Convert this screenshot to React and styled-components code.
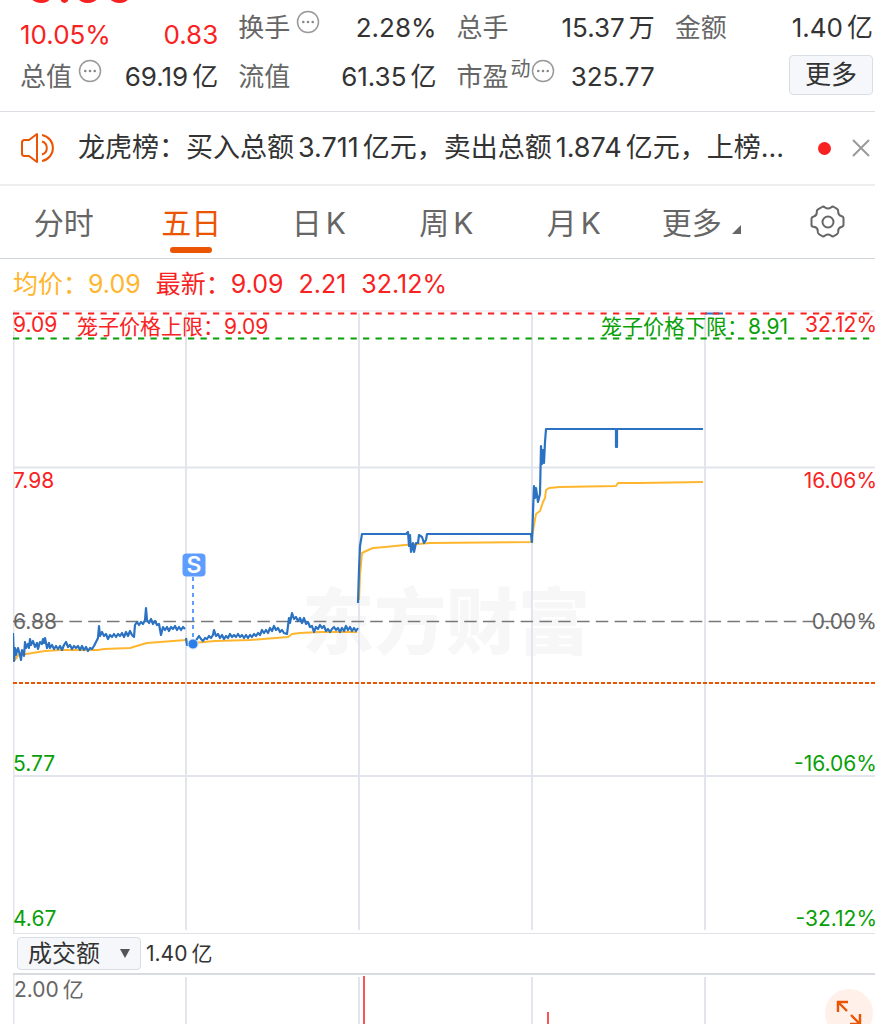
import React, { useState } from 'react'
import styled, { createGlobalStyle } from 'styled-components'

const GlobalStyle = createGlobalStyle`
  * {
    box-sizing: border-box;
  }

  body {
    margin: 0;
    background: #fff;
    color: #333;
    font-family: Inter, 'Noto Sans CJK SC', sans-serif;
  }

  button,
  select {
    font-family: inherit;
    color: inherit;
    margin: 0;
    padding: 0;
    border: none;
    background: none;
    cursor: pointer;
  }
`

const Page = styled.main`
  display: flex;
  flex-direction: column;
  height: 100vh;
  overflow: hidden;
`

const Quote = styled.section`
  display: grid;
  grid-template-columns: repeat(4, 1fr);
  grid-template-rows: 52px 46px;
  column-gap: 20px;
  height: 112px;
  flex: none;
  padding: 0 2px 0 20px;
  border-bottom: 1px solid #dcdfe3;
  font-size: 26px;
  line-height: 32px;
`

const PriceCell = styled.div`
  display: flex;
  flex-direction: column;
  justify-content: flex-end;
  overflow: hidden;
  padding-bottom: 1px;
  color: #f92222;
`

const Price = styled.strong`
  margin-bottom: 10px;
  padding-left: 6px;
  font-size: 50px;
  line-height: 48px;
  font-weight: 600;
`

const PriceChange = styled.div`
  display: flex;
  justify-content: space-between;
`

const Stat = styled.div`
  display: flex;
  align-items: center;
  justify-content: space-between;
  padding-top: 4px;
  white-space: nowrap;
`

const StatName = styled.span`
  display: flex;
  align-items: center;
  gap: 6px;
  color: #666;

  sup {
    margin: -16px -6px 0 -4px;
    font-size: 20px;
    line-height: 24px;
  }

  svg {
    margin-top: -12px;
  }
`

const Num = styled.span`
  margin: 0 4px;

  &:first-child {
    margin-left: 0;
  }
`

const MoreButton = styled.button`
  justify-self: end;
  align-self: center;
  width: 84px;
  height: 40px;
  border: 1px solid #d9dde6;
  border-radius: 4px;
  background: #f6f7fa;
  font-size: 26px;
  line-height: 32px;
`

const Notice = styled.section`
  display: flex;
  align-items: center;
  flex: none;
  height: 74px;
  padding: 0 4px 0 20px;
  border-bottom: 2px solid #eee;
`

const NoticeText = styled.p`
  flex: 1;
  min-width: 0;
  margin: 0 0 0 20px;
  overflow: hidden;
  white-space: nowrap;
  font-size: 27px;
  line-height: 36px;

  ${Num}:first-child {
    margin-left: 4px;
  }
`

const Dot = styled.i`
  width: 13px;
  height: 13px;
  margin: 0 20px;
  border-radius: 50%;
  background: #f92222;
`

const IconButton = styled.button`
  display: flex;
  align-items: center;
  justify-content: center;
`

const Tabs = styled.nav`
  display: flex;
  flex: none;
  height: 73px;
  border-bottom: 1px solid #d0d5da;
`

const Tab = styled.button`
  position: relative;
  flex: 1;
  padding-top: 2px;
  font-size: 30px;
  line-height: 36px;
  color: ${props => (props.$active ? '#ea5504' : '#666')};

  &::after {
    content: '';
    display: ${props => (props.$active ? 'block' : 'none')};
    position: absolute;
    left: 50%;
    bottom: 5px;
    width: 42px;
    height: 6px;
    margin-left: -21px;
    border-radius: 3px;
    background: #ea5504;
  }

  ${Num} {
    margin: 0 0 0 4px;
  }

  svg {
    margin-left: 10px;
  }
`

const SettingsButton = styled(IconButton)`
  width: 110px;
  padding-left: 16px;
`

const Legend = styled.div`
  display: flex;
  align-items: baseline;
  gap: 15px;
  flex: none;
  height: 51px;
  padding-left: 13px;
  font-size: 25px;
  line-height: 51px;
  color: #f92222;
`

const Average = styled.span`
  color: #ffb62e;
`

const Chart = styled.section`
  position: relative;
  flex: 1;
  min-height: 300px;
  margin-left: 13px;

  > svg {
    position: relative;
    display: block;
    width: 100%;
    height: 100%;
  }
`

const Watermark = styled.div`
  position: absolute;
  left: 50%;
  top: 50%;
  transform: translate(-50%, -50%);
  margin-left: 2px;
  white-space: nowrap;
  font-size: 72px;
  line-height: 80px;
  font-weight: 900;
  color: #f7f7f7;
`

const AxisLabel = styled.span`
  position: absolute;
  top: ${props => props.$top};
  left: ${props => (props.$right ? 'auto' : '0')};
  right: ${props => (props.$right ? '-2px' : 'auto')};
  transform: translateY(-50%);
  font-size: 21px;
  line-height: 24px;
  color: ${props => props.$color};
`

const LimitLabel = styled.span`
  position: absolute;
  top: 5px;
  left: ${props => (props.$right ? 'auto' : '64px')};
  right: ${props => (props.$right ? '87px' : 'auto')};
  font-size: 21px;
  line-height: 24px;
  white-space: nowrap;
  color: ${props => props.$color};
`

const Marker = styled.span`
  position: absolute;
  left: 21%;
  top: 41%;
  transform: translate(-50%, -50%);
  width: 23px;
  height: 23px;
  border-radius: 4px;
  background: #5c9dff;
  color: #fff;
  font-size: 23px;
  line-height: 23px;
  font-weight: 600;
  text-align: center;
`

const VolumeBar = styled.div`
  display: flex;
  align-items: center;
  gap: 5px;
  flex: none;
  height: 42px;
  margin-left: 13px;
  padding-left: 4px;
  border-top: 1px solid #dfe2e8;
  border-bottom: 2px solid #d8dbe0;
  font-size: 21px;
  line-height: 24px;
`

const SelectBox = styled.label`
  position: relative;
  display: block;

  select {
    appearance: none;
    width: 124px;
    height: 33px;
    padding-left: 10px;
    border: 1px solid #d9dde6;
    border-radius: 4px;
    background: #f6f7fa;
    font-size: 24px;
    line-height: 30px;
  }

  svg {
    position: absolute;
    right: 11px;
    top: 12px;
    pointer-events: none;
  }
`

const VolumeChart = styled.section`
  position: relative;
  flex: none;
  height: 49px;
  margin-left: 13px;
  overflow: hidden;

  > svg {
    display: block;
    width: 100%;
    height: 100%;
  }
`

const VolumeMax = styled.span`
  position: absolute;
  left: 1px;
  top: 3px;
  font-size: 21px;
  line-height: 24px;
  color: #666;
`

const ExpandButton = styled(IconButton)`
  position: absolute;
  right: 2px;
  top: 14px;
  width: 48px;
  height: 48px;
  border-radius: 50%;
  background: #fff0ea;
`

const RED = '#f92222'
const GREEN = '#089f08'
const GRID_X = [186, 359, 532, 705]

const labels = [
  { price: '9.09', rate: '32.12%', top: '15px', color: RED },
  { price: '7.98', rate: '16.06%', top: '27.5%', color: RED },
  { price: '6.88', rate: '0.00%', top: '50%', color: '#666' },
  { price: '5.77', rate: '-16.06%', top: '72.8%', color: GREEN },
  { price: '4.67', rate: '-32.12%', top: 'calc(100% - 14px)', color: GREEN },
]

// 每日分时价
const priceLines = [
  '13,633 14,661 15,648 16,655 18,648 20,655 21,660 22,650 24,656 25,642 26,648 28,644 29,648 30,639 31,645 33,641 35,647 37,643 38,649 40,642 42,644 43,639 44,643 45,638 47,648 49,643 50,648 52,645 54,649 56,646 58,649 60,646 62,650 64,645 66,642 68,647 70,645 72,649 74,646 76,648 78,646 80,650 82,646 84,650 86,647 88,651 90,648 92,649 94,646 96,642 98,638 99,626 100,636 102,632 104,636 106,634 108,639 110,635 112,637 114,634 116,637 118,634 120,636 122,633 124,637 126,632 128,636 130,631 132,635 134,637 135,625 137,622 139,625 141,622 143,624 145,620 146,608 147,620 149,623 151,619 153,624 155,621 157,625 159,624 161,635 163,627 165,630 167,627 169,631 171,627 173,629 175,626 177,630 179,627 181,630 183,627 185,629',
  '186,638 187,645 193,644 197,639 199,636 201,639 203,641 205,638 207,639 209,636 211,638 213,635 214,630 216,636 218,634 220,638 222,635 224,639 226,636 228,638 230,634 232,637 234,635 236,637 238,634 240,637 242,635 244,638 246,635 248,638 250,635 252,637 254,634 256,636 258,633 260,635 262,630 264,633 266,630 268,633 270,628 272,631 274,626 276,630 278,628 280,632 282,630 284,633 287,634 289,618 290,623 292,613 294,619 296,617 298,621 300,618 302,623 304,618 306,624 308,622 310,627 312,626 314,632 316,627 318,629 320,625 322,628 324,626 326,631 328,629 330,632 332,629 334,627 336,630 338,628 340,632 342,628 344,631 346,626 348,630 350,627 352,631 354,628 356,631 358,628',
  '358,603 359,570 360,546 362,534 406,534 408,532 409,546 410,535 411,552 413,543 414,552 416,543 418,543 419,535 422,537 424,543 426,540 427,534 531,534 532,542 533,512 534,486 535,498 536,488 538,502 540,494 541,446 542,464 543,450 544,463 545,442 546,429 616,429 616,447 617,447 617,429 703,429',
]

const averageLines = [
  '13,648 15,660 19,654 26,654 45,651 60,650 98,650 104,649 130,648 140,645 147,643 160,642 186,640',
  '193,643 215,641 250,640 288,637 292,634 300,633 320,632 357,632',
  '359,600 360,575 362,553 366,551 373,548 385,547 405,545 430,543 531,542 534,525 536,514 540,511 543,502 545,498 546,490 549,488 560,487 616,486 618,483 640,483 703,482',
]

const InfoIcon = () => (
  <svg width="24" height="24" viewBox="0 0 24 24" fill="none">
    <circle cx="12" cy="12" r="10.5" stroke="#999" strokeWidth="1.5" />
    <circle cx="7.3" cy="12" r="1.3" fill="#888" />
    <circle cx="12" cy="12" r="1.3" fill="#888" />
    <circle cx="16.7" cy="12" r="1.3" fill="#888" />
  </svg>
)

const SpeakerIcon = () => (
  <svg
    width="38"
    height="32"
    viewBox="0 0 38 32"
    fill="none"
    stroke="#ea5504"
    strokeWidth="2"
    strokeLinejoin="round"
  >
    <path d="M17 2v28l-8-6H4.500q-2.500 0-2.500-2.500V10.500Q2 8 4.500 8H9z" />
    <path d="M22 9.500a6.800 6.800 0 0 1 0 13M22 3a13.200 13.200 0 0 1 0 26" />
  </svg>
)

const GearIcon = () => (
  <svg
    width="36"
    height="36"
    viewBox="0 0 36 36"
    fill="none"
    stroke="#666"
    strokeWidth="2"
    strokeLinejoin="round"
  >
    <path d="M12 3q1.500-1 3 .5 3 2 6 0 1.500-1.500 3-.5l3 1.800q1.500 1 1.200 2.700-.2 3.500 3 4.500 2.300.6 2.300 2.300v6.400q0 1.700-2.300 2.300-3.200 1-3 4.500.3 1.700-1.200 2.700l-3 1.800q-1.500 1-3-.5-3-2-6 0-1.500 1.500-3 .5l-3-1.800q-1.500-1-1.200-2.700.2-3.500-3-4.500Q1.500 22.900 1.500 21.200v-6.400q0-1.700 2.300-2.300 3.200-1 3-4.500-.3-1.700 1.200-2.700z" />
    <circle cx="18" cy="18" r="5.500" />
  </svg>
)

const tabs = [
  { id: 'minute', text: '分时' },
  { id: 'five', text: '五日' },
  { id: 'day', text: '日', unit: 'K' },
  { id: 'week', text: '周', unit: 'K' },
  { id: 'month', text: '月', unit: 'K' },
  { id: 'more', text: '更多', menu: true },
]

const App = () => {
  const [active, setActive] = useState('five')
  const [showNotice, setShowNotice] = useState(true)

  return (
    <Page>
      <GlobalStyle />
      <Quote>
        <PriceCell>
          <Price>9.09</Price>
          <PriceChange>
            <span>10.05%</span>
            <span>0.83</span>
          </PriceChange>
        </PriceCell>
        <Stat>
          <StatName>
            换手
            <InfoIcon />
          </StatName>
          <span>2.28%</span>
        </Stat>
        <Stat>
          <StatName>总手</StatName>
          <span>
            <Num>15.37</Num>万
          </span>
        </Stat>
        <Stat>
          <StatName>金额</StatName>
          <span>
            <Num>1.40</Num>亿
          </span>
        </Stat>
        <Stat>
          <StatName>
            总值
            <InfoIcon />
          </StatName>
          <span>
            <Num>69.19</Num>亿
          </span>
        </Stat>
        <Stat>
          <StatName>流值</StatName>
          <span>
            <Num>61.35</Num>亿
          </span>
        </Stat>
        <Stat>
          <StatName>
            市盈<sup>动</sup>
            <InfoIcon />
          </StatName>
          <span>325.77</span>
        </Stat>
        <MoreButton>更多</MoreButton>
      </Quote>

      {showNotice && (
        <Notice>
          <SpeakerIcon />
          <NoticeText>
            龙虎榜：买入总额<Num>3.711</Num>亿元，卖出总额<Num>1.874</Num>
            亿元，上榜...
          </NoticeText>
          <Dot />
          <IconButton aria-label="关闭" onClick={() => setShowNotice(false)}>
            <svg width="20" height="20" viewBox="0 0 20 20" stroke="#999" strokeWidth="2">
              <path d="M2 2l16 16M18 2L2 18" />
            </svg>
          </IconButton>
        </Notice>
      )}

      <Tabs>
        {tabs.map(({ id, text, unit, menu }) => (
          <Tab key={id} $active={id === active} onClick={() => setActive(id)}>
            {text}
            {unit && <Num>{unit}</Num>}
            {menu && (
              <svg width="9" height="9" viewBox="0 0 9 9">
                <path d="M9 0v9H0z" fill="#666" />
              </svg>
            )}
          </Tab>
        ))}
        <SettingsButton aria-label="设置">
          <GearIcon />
        </SettingsButton>
      </Tabs>

      <Legend>
        <Average>均价：9.09</Average>
        <span>最新：9.09</span>
        <span>2.21</span>
        <span>32.12%</span>
      </Legend>

      <Chart>
        <Watermark>东方财富</Watermark>
        <svg viewBox="13 310 862 623" preserveAspectRatio="none" fill="none">
          <g stroke="#e3e5ed" strokeWidth="2">
            <path d="M13 311H875" strokeWidth="1" />
            <path d="M13.500 311V933" />
            <path d="M13 467.500H875M13 776H875" />
            {GRID_X.map(x => (
              <path key={x} d={`M${x} 313V930`} />
            ))}
          </g>
          <path d="M13 621.500H875" stroke="#777" strokeWidth="1.700" strokeDasharray="12.500 6.300" />
          <path d="M13 683H875" stroke="#ea5504" strokeWidth="2" strokeDasharray="4 2" />
          <path d="M705 313.500H723" stroke="#2b72c2" strokeWidth="2" />
          <path d="M13 313.500H875" stroke={RED} strokeWidth="2.200" strokeDasharray="6.250" />
          <path d="M13 338.500H875" stroke={GREEN} strokeWidth="2.200" strokeDasharray="6.250" />
          <g stroke="#ffb62e" strokeWidth="2" strokeLinejoin="round">
            {averageLines.map(points => (
              <polyline key={points} points={points} />
            ))}
          </g>
          <g stroke="#2b72c2" strokeWidth="2.200" strokeLinejoin="round">
            {priceLines.map(points => (
              <polyline key={points} points={points} />
            ))}
          </g>
          <path d="M193 577V640" stroke="#5c9dff" strokeWidth="2" strokeDasharray="4" />
          <circle cx="193" cy="644" r="5" fill="#2b7de9" stroke="#cfe2ff" />
        </svg>
        {labels.map(({ price, rate, top, color }) => (
          <React.Fragment key={price}>
            <AxisLabel $top={top} $color={color}>
              {price}
            </AxisLabel>
            <AxisLabel $right $top={top} $color={color}>
              {rate}
            </AxisLabel>
          </React.Fragment>
        ))}
        <LimitLabel $color={RED}>笼子价格上限：9.09</LimitLabel>
        <LimitLabel $right $color={GREEN}>
          笼子价格下限：8.91
        </LimitLabel>
        <Marker>S</Marker>
      </Chart>

      <VolumeBar>
        <SelectBox>
          <select aria-label="指标" defaultValue="成交额">
            <option>成交额</option>
            <option>成交量</option>
          </select>
          <svg width="10" height="9" viewBox="0 0 10 9">
            <path d="M0 0h10L5 9z" fill="#555" />
          </svg>
        </SelectBox>
        <span>
          <Num>1.40</Num>亿
        </span>
      </VolumeBar>

      <VolumeChart>
        <svg viewBox="13 975 862 49" preserveAspectRatio="none" fill="none">
          <g stroke="#e3e5ed" strokeWidth="2">
            <path d="M13.500 975V1024" />
            {GRID_X.map(x => (
              <path key={x} d={`M${x} 977V1024`} />
            ))}
          </g>
          <path d="M364 976V1024M548 1012V1024" stroke="#f95555" strokeWidth="2" />
        </svg>
        <VolumeMax>
          <Num>2.00</Num>亿
        </VolumeMax>
        <ExpandButton aria-label="全屏">
          <svg
            width="26"
            height="26"
            viewBox="0 0 26 26"
            fill="none"
            stroke="#ea5504"
            strokeWidth="2.400"
          >
            <path d="M2 12V2h10M2 2l9 9M24 14v10H14M24 24l-9-9" />
          </svg>
        </ExpandButton>
      </VolumeChart>
    </Page>
  )
}

export default App
